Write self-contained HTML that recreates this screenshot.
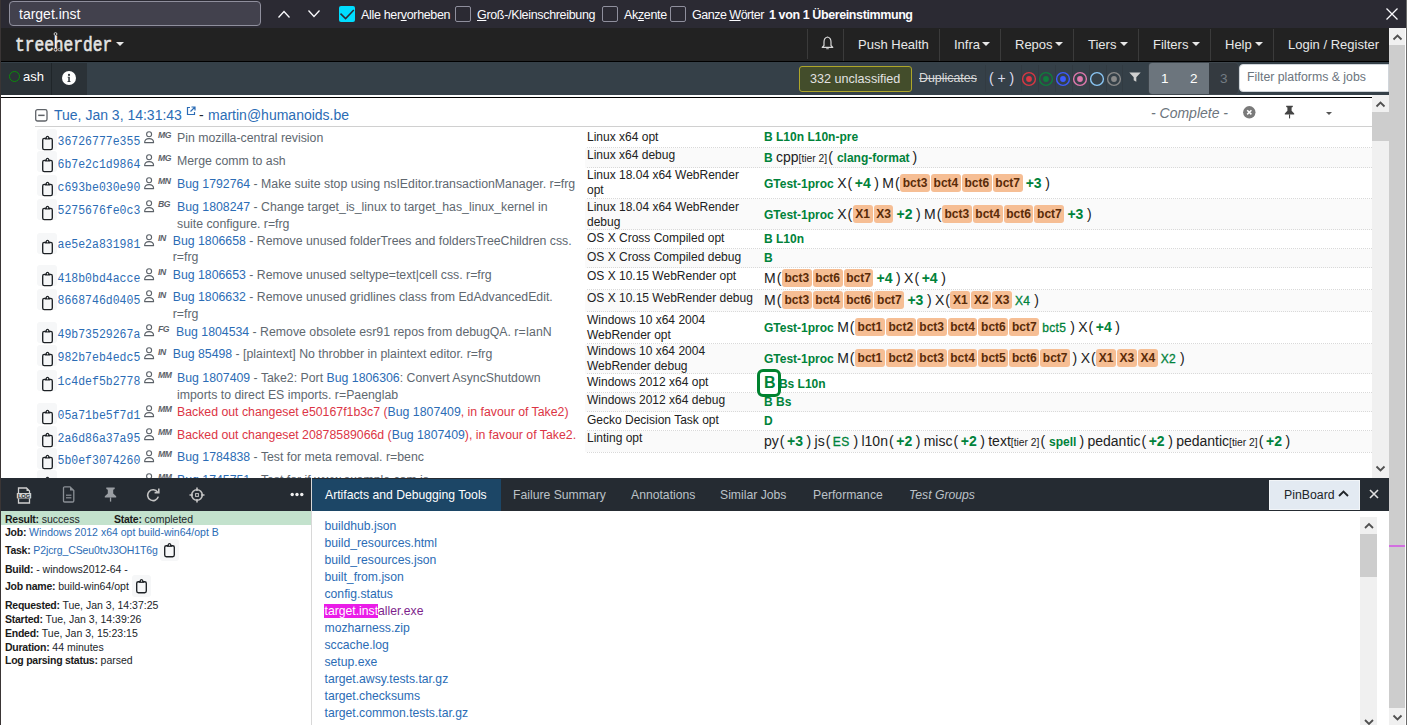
<!DOCTYPE html>
<html><head><meta charset="utf-8">
<style>
*{box-sizing:border-box}
html,body{margin:0;padding:0;width:1407px;height:725px;overflow:hidden;background:#fff;font-family:"Liberation Sans",sans-serif;position:relative}
.a{position:absolute;white-space:nowrap}
#findbar{left:0;top:0;width:1407px;height:28px;background:#2b2a33;color:#fbfbfe;font-size:12.5px;letter-spacing:-0.33px}
#ffield{left:9px;top:1px;width:252px;height:25px;background:#42414d;border:1px solid #8f8f9d;border-radius:4px}
.cb{width:16px;height:16px;border:1px solid #8f8f9d;border-radius:2px;top:6px}
#nav{left:0;top:28px;width:1389px;height:34px;background:#222;border-bottom:1px solid #000;color:#e8e8e8;font-size:13px}
.sep{top:1px;width:1px;height:29px;background:#3b3b3b}
.nt{top:9px;line-height:15px}
.caret{top:14px;width:0;height:0;border-top:4px solid #e8e8e8;border-left:4px solid transparent;border-right:4px solid transparent}
.tier{top:9px;font-size:13.5px;line-height:16px}
#sub{left:0;top:62px;width:1389px;height:33px;background:#354048;color:#fff;font-size:12px}
#pushes{left:0;top:95px;width:1372px;height:383px;background:#fff;overflow:hidden}
#outsb{left:1389px;top:28px;width:16px;height:697px;background:#cdcdcd}
#insb{left:1372px;top:95px;width:17px;height:383px;background:#f0f0f0}
#panel{left:0;top:478px;width:1389px;height:247px;background:#fff}

.clip{width:20px;height:21px;background:#f6f7f8;border-radius:3px}
.hash{font-family:"Liberation Mono",monospace;font-size:11.5px;line-height:16px;color:#2b6cb5;transform:scaleY(1.05);transform-origin:0 12px}
.ini{font-size:8.6px;letter-spacing:-0.4px;line-height:10px;font-weight:bold;font-style:italic;color:#5b6168}
.msg{font-size:12.3px;line-height:16px}
.dot{width:785px;height:1px;background-image:linear-gradient(to right,#d9d9d9 50%,transparent 50%);background-size:2px 1px}
.plat{font-size:12px;line-height:15px;color:#212121}
.jobs{font-size:12px;line-height:18px;height:18px}
.js{font-weight:bold;color:#00823a}
.jn{font-weight:normal;color:#00823a;-webkit-text-stroke:0.3px #00823a;margin:0 2px 0 2.5px;letter-spacing:0.3px}
.jb{display:inline-block;font-weight:bold;color:#5a2b08;background:#f6be94;border-radius:3px;padding:0 2.6px;margin:0 .5px;height:18px;vertical-align:top}
.gs{font-size:14px;color:#212121}
.gp,.gp2{font-size:14px;color:#212121}
.gp2{margin-left:2px}
.gp{margin:0 0 0 1px}
.cnt{font-weight:bold;font-size:14px;color:#00823a;margin:0 1.5px 0 2.6px}
.tier2{font-size:10.3px;color:#212121}
.sel{position:relative}
.sel:before{content:'';position:absolute;left:-7px;top:-8px;width:24px;height:28px;border:3px solid #00822f;border-radius:6px;background:#fff;box-sizing:border-box;z-index:0}
.sel i{position:relative;z-index:1;font-style:normal;font-size:16px}
.det{font-size:10.5px;line-height:12px;color:#212529}
.det b{color:#1a1a1a;letter-spacing:-0.25px}
.tab{top:10px;font-size:12.2px;line-height:15px;color:#bcc2c8}
.art{font-size:12.2px;line-height:14px;color:#2b6cb5}
</style></head><body>

<div id="findbar" class="a">
  <div id="ffield" class="a"></div>
  <div class="a" style="left:19px;top:5px;font-size:14px;line-height:18px;letter-spacing:0">target.inst</div>
  <svg class="a" style="left:277px;top:9px" width="14" height="10" viewBox="0 0 14 10"><path d="M1.5 8.5 L7 2.5 L12.5 8.5" fill="none" stroke="#fbfbfe" stroke-width="1.3"/></svg>
  <svg class="a" style="left:307px;top:9px" width="14" height="10" viewBox="0 0 14 10"><path d="M1.5 1.5 L7 7.5 L12.5 1.5" fill="none" stroke="#fbfbfe" stroke-width="1.3"/></svg>
  <div class="a" style="left:339px;top:6px;width:16px;height:16px;background:#00ddff;border-radius:2px"></div>
  <svg class="a" style="left:339px;top:6px" width="16" height="16" viewBox="0 0 16 16"><path d="M1.5 7.6 L6.6 12.6 L14.8 4.1" fill="none" stroke="#2b2a33" stroke-width="1.5"/></svg>
  <div class="a" style="left:361px;top:8px;line-height:15px">Alle her<u>v</u>orheben</div>
  <div class="a cb" style="left:455px"></div>
  <div class="a" style="left:477px;top:8px;line-height:15px"><u>G</u>roß-/Kleinschreibung</div>
  <div class="a cb" style="left:602px"></div>
  <div class="a" style="left:624px;top:8px;line-height:15px">Ak<u>z</u>ente</div>
  <div class="a cb" style="left:670px"></div>
  <div class="a" style="left:692px;top:8px;line-height:15px;letter-spacing:-0.5px">Ganze <u>W</u>örter</div>
  <div class="a" style="left:769px;top:8px;line-height:15px;font-weight:bold;letter-spacing:-0.4px">1 von 1 Übereinstimmung</div>
  <svg class="a" style="left:1385px;top:7px" width="14" height="14" viewBox="0 0 14 14"><path d="M1.5 1.5 L12.5 12.5 M12.5 1.5 L1.5 12.5" stroke="#fbfbfe" stroke-width="1.3"/></svg>
  <div class="a" style="left:1406px;top:0;width:1px;height:725px;background:#6b6b6b"></div>
</div>

<div id="nav" class="a">
  <div class="a" style="left:15px;top:7.5px;font-family:'Liberation Mono',monospace;font-size:16.2px;line-height:20px;color:#e4e4e4;-webkit-text-stroke:0.5px #e4e4e4;transform:scaleY(1.2);transform-origin:0 50%">treeherder</div>
  <div class="a caret" style="left:116px;top:14px"></div>
  <svg class="a" style="left:51px;top:4px" width="10" height="20" viewBox="0 0 10 20"><path d="M4.5 3 V16.5" stroke="#f2f2f2" stroke-width="1.2"/><circle cx="4.5" cy="2" r="1.4" fill="#222" stroke="#ddd" stroke-width="0.9"/><circle cx="4.5" cy="17.6" r="1.4" fill="#222" stroke="#ddd" stroke-width="0.9"/><circle cx="8.3" cy="17.6" r="1.2" fill="#222" stroke="#ccc" stroke-width="0.8"/></svg>
  <div class="a sep" style="left:807px;height:30px"></div>
  <svg class="a" style="left:821px;top:8px" width="13" height="14" viewBox="0 0 13 14"><path d="M6.5 1 C4 1.5 3 3.5 3 6 V9.5 L1.2 11.3 H11.8 L10 9.5 V6 C10 3.5 9 1.5 6.5 1 Z" fill="none" stroke="#d8d8d8" stroke-width="1.2" stroke-linejoin="round"/><path d="M5.2 12.3 H7.8 V13.2 H5.2Z" fill="#d8d8d8"/></svg>
  <div class="a sep" style="left:843px;height:32px"></div>
  <div class="a nt" style="left:858px">Push Health</div>
  <div class="a sep" style="left:939px;height:32px"></div>
  <div class="a nt" style="left:954px">Infra</div><div class="a caret" style="left:982px"></div>
  <div class="a sep" style="left:1000px;height:32px"></div>
  <div class="a nt" style="left:1015px">Repos</div><div class="a caret" style="left:1055px"></div>
  <div class="a sep" style="left:1073px;height:32px"></div>
  <div class="a nt" style="left:1088px">Tiers</div><div class="a caret" style="left:1120px"></div>
  <div class="a sep" style="left:1138px;height:32px"></div>
  <div class="a nt" style="left:1153px">Filters</div><div class="a caret" style="left:1192px"></div>
  <div class="a sep" style="left:1210px;height:32px"></div>
  <div class="a nt" style="left:1225px">Help</div><div class="a caret" style="left:1255px"></div>
  <div class="a sep" style="left:1273px;height:32px"></div>
  <div class="a nt" style="left:1288px">Login / Register</div>
</div>

<div id="sub" class="a">
  <div class="a" style="left:1px;top:1px;width:86px;height:32px;background:#2b3237"></div>
  <div class="a" style="left:51px;top:1px;width:1px;height:32px;background:#1f2529"></div>
  <div class="a" style="left:9px;top:9px;width:11px;height:11px;border:1.3px solid #0b8a0b;border-radius:50%"></div>
  <div class="a" style="left:23px;top:7px;font-size:13px;line-height:15px;color:#fff">ash</div>
  <svg class="a" style="left:62px;top:9px" width="14" height="14" viewBox="0 0 14 14"><circle cx="7" cy="7" r="7" fill="#fff"/><circle cx="7" cy="3.9" r="1.1" fill="#2b3237"/><path d="M5.6 5.8 H7.8 V10.2 H8.6 V11 H5.4 V10.2 H6.3 V6.6 H5.6Z" fill="#2b3237"/></svg>
  <div class="a" style="left:799px;top:4px;width:113px;height:26px;border:1px solid #aea62a;border-radius:3px;background:#434d2b"></div>
  <div class="a" style="left:810px;top:10px;font-size:12.6px;line-height:15px;color:#e2e2e2">332 unclassified</div>
  <div class="a" style="left:919px;top:9px;font-size:12.4px;line-height:15px;color:#d8d8d8;text-decoration:line-through">Duplicates</div>
  <div class="a" style="left:985px;top:3px;width:1px;height:27px;background:#323b42"></div>
  <div class="a" style="left:989px;top:8px;font-size:14px;line-height:17px;color:#dde">( + )</div>
  <svg class="a" style="left:1021px;top:9px" width="16" height="16" viewBox="0 0 16 16"><circle cx="8" cy="8" r="6.4" fill="none" stroke="#da3742" stroke-width="1.4"/><circle cx="8" cy="8" r="2.9" fill="#da3742"/></svg>
  <div class="a" style="left:1021px;top:3px;width:1px;height:27px;background:#323b42"></div>
  <svg class="a" style="left:1038px;top:9px" width="16" height="16" viewBox="0 0 16 16"><circle cx="8" cy="8" r="6.4" fill="none" stroke="#0f7d3b" stroke-width="1.4"/><circle cx="8" cy="8" r="2.9" fill="#0f7d3b"/></svg>
  <div class="a" style="left:1038px;top:3px;width:1px;height:27px;background:#323b42"></div>
  <svg class="a" style="left:1055px;top:9px" width="16" height="16" viewBox="0 0 16 16"><circle cx="8" cy="8" r="6.4" fill="none" stroke="#3d5cff" stroke-width="1.4"/><circle cx="8" cy="8" r="2.9" fill="#3d5cff"/></svg>
  <div class="a" style="left:1055px;top:3px;width:1px;height:27px;background:#323b42"></div>
  <svg class="a" style="left:1072px;top:9px" width="16" height="16" viewBox="0 0 16 16"><circle cx="8" cy="8" r="6.4" fill="none" stroke="#e078ad" stroke-width="1.4"/><circle cx="8" cy="8" r="2.9" fill="#e078ad"/></svg>
  <div class="a" style="left:1072px;top:3px;width:1px;height:27px;background:#323b42"></div>
  <svg class="a" style="left:1089px;top:9px" width="16" height="16" viewBox="0 0 16 16"><circle cx="8" cy="8" r="6.4" fill="none" stroke="#8ac6f5" stroke-width="1.4"/></svg>
  <div class="a" style="left:1089px;top:3px;width:1px;height:27px;background:#323b42"></div>
  <svg class="a" style="left:1106px;top:9px" width="16" height="16" viewBox="0 0 16 16"><circle cx="8" cy="8" r="6.4" fill="none" stroke="#8a8a8a" stroke-width="1.4"/><circle cx="8" cy="8" r="2.9" fill="#8a8a8a"/></svg>
  <div class="a" style="left:1106px;top:3px;width:1px;height:27px;background:#323b42"></div>
  <div class="a" style="left:1122px;top:3px;width:1px;height:27px;background:#323b42"></div>
  <svg class="a" style="left:1129px;top:10px" width="12" height="10" viewBox="0 0 12 10"><path d="M0.3 0.5 H11.7 L7.3 5.3 V9.8 L4.7 8.3 V5.3 Z" fill="#cfcfcf"/></svg>
  <div class="a" style="left:1148px;top:0px;width:91px;height:32.5px;border-radius:4px;overflow:hidden;background:#343a40;border:1px solid #3e464d">
    <div class="a" style="left:0;top:0;width:60px;height:32px;background:#6c757d"></div>
  </div>
  <div class="a tier" style="left:1161px;color:#fff">1</div>
  <div class="a tier" style="left:1190px;color:#fff">2</div>
  <div class="a tier" style="left:1220px;color:#737c84">3</div>
  <div class="a" style="left:1239px;top:2px;width:150px;height:28px;background:#fff;border-radius:4px 0 0 4px;border:1px solid #d0d5da"></div>
  <div class="a" style="left:1247px;top:8px;font-size:12.3px;line-height:15px;color:#6c757d">Filter platforms &amp; jobs</div>
</div>

<div id="pushes" class="a">
<div class="a" style="left:0;top:2px;width:1372px;height:1px;background:#000"></div>
<svg class="a" style="left:35px;top:14px" width="13" height="13" viewBox="0 0 13 13"><rect x="0.7" y="0.7" width="11.3" height="11.3" rx="1.8" fill="none" stroke="#5f6368" stroke-width="1.3"/><rect x="3.2" y="5.6" width="6.4" height="1.5" fill="#5f6368"/></svg>
<div class="a" style="left:54px;top:12px;font-size:14px;line-height:17px;color:#2b6cb5">Tue, Jan 3, 14:31:43</div>
<svg class="a" style="left:186px;top:11px" width="10" height="10" viewBox="0 0 10 10"><path d="M4 1.5 H1.5 V8.5 H8.5 V6" fill="none" stroke="#2b6cb5" stroke-width="1.2"/><path d="M5.5 1 H9 V4.5 M9 1 L4.5 5.5" fill="none" stroke="#2b6cb5" stroke-width="1.2"/></svg>
<div class="a" style="left:199px;top:12px;font-size:14px;line-height:17px;color:#212529">-</div>
<div class="a" style="left:208px;top:12px;font-size:14px;line-height:17px;color:#2b6cb5">martin@humanoids.be</div>
<div class="a" style="left:1151px;top:10px;font-size:14px;line-height:17px;color:#6c757d;font-style:italic">- Complete -</div>
<svg class="a" style="left:1243px;top:11px" width="13" height="13" viewBox="0 0 13 13"><circle cx="6.3" cy="6.3" r="6.2" fill="#7a7a7a"/><path d="M4.2 4.2 L8.4 8.4 M8.4 4.2 L4.2 8.4" stroke="#fff" stroke-width="1.5"/></svg>
<svg class="a" style="left:1284px;top:10px" width="11" height="14" viewBox="0 0 11 14"><path d="M2.2 0.8 H8.8 V2 L7.6 2.6 V5.8 L10.2 8.4 V9.4 H0.8 V8.4 L3.4 5.8 V2.6 L2.2 2 Z" fill="#444"/><rect x="5" y="9.4" width="1.1" height="4" fill="#444"/></svg>
<div class="a" style="left:1326px;top:16.5px;width:0;height:0;border-top:3.5px solid #555;border-left:3.5px solid transparent;border-right:3.5px solid transparent"></div>
<div class="a" style="left:35px;top:31px;width:1337px;height:1px;background:#d0d0d0"></div>
<div class="a clip" style="left:37px;top:33.6px"><svg width="20" height="22" viewBox="0 0 20 22" style="position:absolute;left:0;top:0"><rect x="5.7" y="9.4" width="9.6" height="11.2" rx="1.6" fill="none" stroke="#1d2125" stroke-width="1.35"/><path d="M7.6 10.4 L8.3 9 Q9.1 6.8 10.5 6.8 Q11.9 6.8 12.7 9 L13.4 10.4 Z" fill="#1d2125"/><circle cx="10.5" cy="8.7" r="0.7" fill="#fff"/></svg></div>
<div class="a hash" style="left:57.5px;top:38.8px">36726777e355</div>
<svg class="a" style="left:143px;top:35.8px" width="13" height="13" viewBox="0 0 13 13"><circle cx="6.1" cy="3.2" r="2.5" fill="none" stroke="#5b6168" stroke-width="1.1"/><path d="M1.6 11.6 Q1.6 7.6 6.1 7.6 Q10.6 7.6 10.6 11.6 Z" fill="none" stroke="#5b6168" stroke-width="1.1" stroke-linejoin="round"/></svg>
<div class="a ini" style="left:158px;top:35.3px">MG</div>
<div class="a msg" style="left:177px;top:35.0px"><span style="color:#606870">Pin mozilla-central revision</span></div>
<div class="a clip" style="left:37px;top:56.3px"><svg width="20" height="22" viewBox="0 0 20 22" style="position:absolute;left:0;top:0"><rect x="5.7" y="9.4" width="9.6" height="11.2" rx="1.6" fill="none" stroke="#1d2125" stroke-width="1.35"/><path d="M7.6 10.4 L8.3 9 Q9.1 6.8 10.5 6.8 Q11.9 6.8 12.7 9 L13.4 10.4 Z" fill="#1d2125"/><circle cx="10.5" cy="8.7" r="0.7" fill="#fff"/></svg></div>
<div class="a hash" style="left:57.5px;top:61.5px">6b7e2c1d9864</div>
<svg class="a" style="left:143px;top:58.5px" width="13" height="13" viewBox="0 0 13 13"><circle cx="6.1" cy="3.2" r="2.5" fill="none" stroke="#5b6168" stroke-width="1.1"/><path d="M1.6 11.6 Q1.6 7.6 6.1 7.6 Q10.6 7.6 10.6 11.6 Z" fill="none" stroke="#5b6168" stroke-width="1.1" stroke-linejoin="round"/></svg>
<div class="a ini" style="left:158px;top:58.0px">MG</div>
<div class="a msg" style="left:177px;top:57.7px"><span style="color:#606870">Merge comm to ash</span></div>
<div class="a clip" style="left:37px;top:79.5px"><svg width="20" height="22" viewBox="0 0 20 22" style="position:absolute;left:0;top:0"><rect x="5.7" y="9.4" width="9.6" height="11.2" rx="1.6" fill="none" stroke="#1d2125" stroke-width="1.35"/><path d="M7.6 10.4 L8.3 9 Q9.1 6.8 10.5 6.8 Q11.9 6.8 12.7 9 L13.4 10.4 Z" fill="#1d2125"/><circle cx="10.5" cy="8.7" r="0.7" fill="#fff"/></svg></div>
<div class="a hash" style="left:57.5px;top:84.7px">c693be030e90</div>
<svg class="a" style="left:143px;top:81.7px" width="13" height="13" viewBox="0 0 13 13"><circle cx="6.1" cy="3.2" r="2.5" fill="none" stroke="#5b6168" stroke-width="1.1"/><path d="M1.6 11.6 Q1.6 7.6 6.1 7.6 Q10.6 7.6 10.6 11.6 Z" fill="none" stroke="#5b6168" stroke-width="1.1" stroke-linejoin="round"/></svg>
<div class="a ini" style="left:158px;top:81.2px">MN</div>
<div class="a msg" style="left:177px;top:80.9px"><span style="color:#2b6cb5">Bug 1792764</span><span style="color:#606870"> - Make suite stop using nsIEditor.transactionManager. r=frg</span></div>
<div class="a clip" style="left:37px;top:103.7px"><svg width="20" height="22" viewBox="0 0 20 22" style="position:absolute;left:0;top:0"><rect x="5.7" y="9.4" width="9.6" height="11.2" rx="1.6" fill="none" stroke="#1d2125" stroke-width="1.35"/><path d="M7.6 10.4 L8.3 9 Q9.1 6.8 10.5 6.8 Q11.9 6.8 12.7 9 L13.4 10.4 Z" fill="#1d2125"/><circle cx="10.5" cy="8.7" r="0.7" fill="#fff"/></svg></div>
<div class="a hash" style="left:57.5px;top:107.7px">5275676fe0c3</div>
<svg class="a" style="left:143px;top:104.7px" width="13" height="13" viewBox="0 0 13 13"><circle cx="6.1" cy="3.2" r="2.5" fill="none" stroke="#5b6168" stroke-width="1.1"/><path d="M1.6 11.6 Q1.6 7.6 6.1 7.6 Q10.6 7.6 10.6 11.6 Z" fill="none" stroke="#5b6168" stroke-width="1.1" stroke-linejoin="round"/></svg>
<div class="a ini" style="left:158px;top:104.2px">BG</div>
<div class="a msg" style="left:177px;top:103.9px"><span style="color:#2b6cb5">Bug 1808247</span><span style="color:#606870"> - Change target_is_linux to target_has_linux_kernel in</span></div>
<div class="a msg" style="left:177px;top:120.5px"><span style="color:#606870">suite configure. r=frg</span></div>
<div class="a clip" style="left:37px;top:137.5px"><svg width="20" height="22" viewBox="0 0 20 22" style="position:absolute;left:0;top:0"><rect x="5.7" y="9.4" width="9.6" height="11.2" rx="1.6" fill="none" stroke="#1d2125" stroke-width="1.35"/><path d="M7.6 10.4 L8.3 9 Q9.1 6.8 10.5 6.8 Q11.9 6.8 12.7 9 L13.4 10.4 Z" fill="#1d2125"/><circle cx="10.5" cy="8.7" r="0.7" fill="#fff"/></svg></div>
<div class="a hash" style="left:57.5px;top:141.5px">ae5e2a831981</div>
<svg class="a" style="left:143px;top:138.5px" width="13" height="13" viewBox="0 0 13 13"><circle cx="6.1" cy="3.2" r="2.5" fill="none" stroke="#5b6168" stroke-width="1.1"/><path d="M1.6 11.6 Q1.6 7.6 6.1 7.6 Q10.6 7.6 10.6 11.6 Z" fill="none" stroke="#5b6168" stroke-width="1.1" stroke-linejoin="round"/></svg>
<div class="a ini" style="left:158px;top:138.0px">IN</div>
<div class="a msg" style="left:172.7px;top:137.7px"><span style="color:#2b6cb5">Bug 1806658</span><span style="color:#606870"> - Remove unused folderTrees and foldersTreeChildren css.</span></div>
<div class="a msg" style="left:172.7px;top:154.3px"><span style="color:#606870">r=frg</span></div>
<div class="a clip" style="left:37px;top:170.4px"><svg width="20" height="22" viewBox="0 0 20 22" style="position:absolute;left:0;top:0"><rect x="5.7" y="9.4" width="9.6" height="11.2" rx="1.6" fill="none" stroke="#1d2125" stroke-width="1.35"/><path d="M7.6 10.4 L8.3 9 Q9.1 6.8 10.5 6.8 Q11.9 6.8 12.7 9 L13.4 10.4 Z" fill="#1d2125"/><circle cx="10.5" cy="8.7" r="0.7" fill="#fff"/></svg></div>
<div class="a hash" style="left:57.5px;top:175.6px">418b0bd4acce</div>
<svg class="a" style="left:143px;top:172.6px" width="13" height="13" viewBox="0 0 13 13"><circle cx="6.1" cy="3.2" r="2.5" fill="none" stroke="#5b6168" stroke-width="1.1"/><path d="M1.6 11.6 Q1.6 7.6 6.1 7.6 Q10.6 7.6 10.6 11.6 Z" fill="none" stroke="#5b6168" stroke-width="1.1" stroke-linejoin="round"/></svg>
<div class="a ini" style="left:158px;top:172.1px">IN</div>
<div class="a msg" style="left:172.7px;top:171.8px"><span style="color:#2b6cb5">Bug 1806653</span><span style="color:#606870"> - Remove unused seltype=text|cell css. r=frg</span></div>
<div class="a clip" style="left:37px;top:194.1px"><svg width="20" height="22" viewBox="0 0 20 22" style="position:absolute;left:0;top:0"><rect x="5.7" y="9.4" width="9.6" height="11.2" rx="1.6" fill="none" stroke="#1d2125" stroke-width="1.35"/><path d="M7.6 10.4 L8.3 9 Q9.1 6.8 10.5 6.8 Q11.9 6.8 12.7 9 L13.4 10.4 Z" fill="#1d2125"/><circle cx="10.5" cy="8.7" r="0.7" fill="#fff"/></svg></div>
<div class="a hash" style="left:57.5px;top:198.1px">8668746d0405</div>
<svg class="a" style="left:143px;top:195.1px" width="13" height="13" viewBox="0 0 13 13"><circle cx="6.1" cy="3.2" r="2.5" fill="none" stroke="#5b6168" stroke-width="1.1"/><path d="M1.6 11.6 Q1.6 7.6 6.1 7.6 Q10.6 7.6 10.6 11.6 Z" fill="none" stroke="#5b6168" stroke-width="1.1" stroke-linejoin="round"/></svg>
<div class="a ini" style="left:158px;top:194.6px">IN</div>
<div class="a msg" style="left:172.7px;top:194.3px"><span style="color:#2b6cb5">Bug 1806632</span><span style="color:#606870"> - Remove unused gridlines class from EdAdvancedEdit.</span></div>
<div class="a msg" style="left:172.7px;top:210.9px"><span style="color:#606870">r=frg</span></div>
<div class="a clip" style="left:37px;top:227.2px"><svg width="20" height="22" viewBox="0 0 20 22" style="position:absolute;left:0;top:0"><rect x="5.7" y="9.4" width="9.6" height="11.2" rx="1.6" fill="none" stroke="#1d2125" stroke-width="1.35"/><path d="M7.6 10.4 L8.3 9 Q9.1 6.8 10.5 6.8 Q11.9 6.8 12.7 9 L13.4 10.4 Z" fill="#1d2125"/><circle cx="10.5" cy="8.7" r="0.7" fill="#fff"/></svg></div>
<div class="a hash" style="left:57.5px;top:232.4px">49b73529267a</div>
<svg class="a" style="left:143px;top:229.4px" width="13" height="13" viewBox="0 0 13 13"><circle cx="6.1" cy="3.2" r="2.5" fill="none" stroke="#5b6168" stroke-width="1.1"/><path d="M1.6 11.6 Q1.6 7.6 6.1 7.6 Q10.6 7.6 10.6 11.6 Z" fill="none" stroke="#5b6168" stroke-width="1.1" stroke-linejoin="round"/></svg>
<div class="a ini" style="left:158px;top:228.9px">FG</div>
<div class="a msg" style="left:176px;top:228.6px"><span style="color:#2b6cb5">Bug 1804534</span><span style="color:#606870"> - Remove obsolete esr91 repos from debugQA. r=IanN</span></div>
<div class="a clip" style="left:37px;top:250.0px"><svg width="20" height="22" viewBox="0 0 20 22" style="position:absolute;left:0;top:0"><rect x="5.7" y="9.4" width="9.6" height="11.2" rx="1.6" fill="none" stroke="#1d2125" stroke-width="1.35"/><path d="M7.6 10.4 L8.3 9 Q9.1 6.8 10.5 6.8 Q11.9 6.8 12.7 9 L13.4 10.4 Z" fill="#1d2125"/><circle cx="10.5" cy="8.7" r="0.7" fill="#fff"/></svg></div>
<div class="a hash" style="left:57.5px;top:255.2px">982b7eb4edc5</div>
<svg class="a" style="left:143px;top:252.2px" width="13" height="13" viewBox="0 0 13 13"><circle cx="6.1" cy="3.2" r="2.5" fill="none" stroke="#5b6168" stroke-width="1.1"/><path d="M1.6 11.6 Q1.6 7.6 6.1 7.6 Q10.6 7.6 10.6 11.6 Z" fill="none" stroke="#5b6168" stroke-width="1.1" stroke-linejoin="round"/></svg>
<div class="a ini" style="left:158px;top:251.7px">IN</div>
<div class="a msg" style="left:172.7px;top:251.4px"><span style="color:#2b6cb5">Bug 85498</span><span style="color:#606870"> - [plaintext] No throbber in plaintext editor. r=frg</span></div>
<div class="a clip" style="left:37px;top:274.9px"><svg width="20" height="22" viewBox="0 0 20 22" style="position:absolute;left:0;top:0"><rect x="5.7" y="9.4" width="9.6" height="11.2" rx="1.6" fill="none" stroke="#1d2125" stroke-width="1.35"/><path d="M7.6 10.4 L8.3 9 Q9.1 6.8 10.5 6.8 Q11.9 6.8 12.7 9 L13.4 10.4 Z" fill="#1d2125"/><circle cx="10.5" cy="8.7" r="0.7" fill="#fff"/></svg></div>
<div class="a hash" style="left:57.5px;top:278.9px">1c4def5b2778</div>
<svg class="a" style="left:143px;top:275.9px" width="13" height="13" viewBox="0 0 13 13"><circle cx="6.1" cy="3.2" r="2.5" fill="none" stroke="#5b6168" stroke-width="1.1"/><path d="M1.6 11.6 Q1.6 7.6 6.1 7.6 Q10.6 7.6 10.6 11.6 Z" fill="none" stroke="#5b6168" stroke-width="1.1" stroke-linejoin="round"/></svg>
<div class="a ini" style="left:158px;top:275.4px">MM</div>
<div class="a msg" style="left:177px;top:275.1px"><span style="color:#2b6cb5">Bug 1807409</span><span style="color:#606870"> - Take2: Port </span><span style="color:#2b6cb5">Bug 1806306</span><span style="color:#606870">: Convert AsyncShutdown</span></div>
<div class="a msg" style="left:177px;top:291.7px"><span style="color:#606870">imports to direct ES imports. r=Paenglab</span></div>
<div class="a clip" style="left:37px;top:307.7px"><svg width="20" height="22" viewBox="0 0 20 22" style="position:absolute;left:0;top:0"><rect x="5.7" y="9.4" width="9.6" height="11.2" rx="1.6" fill="none" stroke="#1d2125" stroke-width="1.35"/><path d="M7.6 10.4 L8.3 9 Q9.1 6.8 10.5 6.8 Q11.9 6.8 12.7 9 L13.4 10.4 Z" fill="#1d2125"/><circle cx="10.5" cy="8.7" r="0.7" fill="#fff"/></svg></div>
<div class="a hash" style="left:57.5px;top:312.9px">05a71be5f7d1</div>
<svg class="a" style="left:143px;top:309.9px" width="13" height="13" viewBox="0 0 13 13"><circle cx="6.1" cy="3.2" r="2.5" fill="none" stroke="#5b6168" stroke-width="1.1"/><path d="M1.6 11.6 Q1.6 7.6 6.1 7.6 Q10.6 7.6 10.6 11.6 Z" fill="none" stroke="#5b6168" stroke-width="1.1" stroke-linejoin="round"/></svg>
<div class="a ini" style="left:158px;top:309.4px">MM</div>
<div class="a msg" style="left:177px;top:309.1px"><span style="color:#dc3545">Backed out changeset e50167f1b3c7 (</span><span style="color:#2b6cb5">Bug 1807409</span><span style="color:#dc3545">, in favour of Take2)</span></div>
<div class="a clip" style="left:37px;top:330.5px"><svg width="20" height="22" viewBox="0 0 20 22" style="position:absolute;left:0;top:0"><rect x="5.7" y="9.4" width="9.6" height="11.2" rx="1.6" fill="none" stroke="#1d2125" stroke-width="1.35"/><path d="M7.6 10.4 L8.3 9 Q9.1 6.8 10.5 6.8 Q11.9 6.8 12.7 9 L13.4 10.4 Z" fill="#1d2125"/><circle cx="10.5" cy="8.7" r="0.7" fill="#fff"/></svg></div>
<div class="a hash" style="left:57.5px;top:335.7px">2a6d86a37a95</div>
<svg class="a" style="left:143px;top:332.7px" width="13" height="13" viewBox="0 0 13 13"><circle cx="6.1" cy="3.2" r="2.5" fill="none" stroke="#5b6168" stroke-width="1.1"/><path d="M1.6 11.6 Q1.6 7.6 6.1 7.6 Q10.6 7.6 10.6 11.6 Z" fill="none" stroke="#5b6168" stroke-width="1.1" stroke-linejoin="round"/></svg>
<div class="a ini" style="left:158px;top:332.2px">MM</div>
<div class="a msg" style="left:177px;top:331.9px"><span style="color:#dc3545">Backed out changeset 20878589066d (</span><span style="color:#2b6cb5">Bug 1807409</span><span style="color:#dc3545">), in favour of Take2.</span></div>
<div class="a clip" style="left:37px;top:352.7px"><svg width="20" height="22" viewBox="0 0 20 22" style="position:absolute;left:0;top:0"><rect x="5.7" y="9.4" width="9.6" height="11.2" rx="1.6" fill="none" stroke="#1d2125" stroke-width="1.35"/><path d="M7.6 10.4 L8.3 9 Q9.1 6.8 10.5 6.8 Q11.9 6.8 12.7 9 L13.4 10.4 Z" fill="#1d2125"/><circle cx="10.5" cy="8.7" r="0.7" fill="#fff"/></svg></div>
<div class="a hash" style="left:57.5px;top:357.9px">5b0ef3074260</div>
<svg class="a" style="left:143px;top:354.9px" width="13" height="13" viewBox="0 0 13 13"><circle cx="6.1" cy="3.2" r="2.5" fill="none" stroke="#5b6168" stroke-width="1.1"/><path d="M1.6 11.6 Q1.6 7.6 6.1 7.6 Q10.6 7.6 10.6 11.6 Z" fill="none" stroke="#5b6168" stroke-width="1.1" stroke-linejoin="round"/></svg>
<div class="a ini" style="left:158px;top:354.4px">MM</div>
<div class="a msg" style="left:177px;top:354.1px"><span style="color:#2b6cb5">Bug 1784838</span><span style="color:#606870"> - Test for meta removal. r=benc</span></div>
<div class="a clip" style="left:37px;top:375.4px"><svg width="20" height="22" viewBox="0 0 20 22" style="position:absolute;left:0;top:0"><rect x="5.7" y="9.4" width="9.6" height="11.2" rx="1.6" fill="none" stroke="#1d2125" stroke-width="1.35"/><path d="M7.6 10.4 L8.3 9 Q9.1 6.8 10.5 6.8 Q11.9 6.8 12.7 9 L13.4 10.4 Z" fill="#1d2125"/><circle cx="10.5" cy="8.7" r="0.7" fill="#fff"/></svg></div>
<div class="a hash" style="left:57.5px;top:380.6px">8a3b4e0c1f27</div>
<svg class="a" style="left:143px;top:377.6px" width="13" height="13" viewBox="0 0 13 13"><circle cx="6.1" cy="3.2" r="2.5" fill="none" stroke="#5b6168" stroke-width="1.1"/><path d="M1.6 11.6 Q1.6 7.6 6.1 7.6 Q10.6 7.6 10.6 11.6 Z" fill="none" stroke="#5b6168" stroke-width="1.1" stroke-linejoin="round"/></svg>
<div class="a ini" style="left:158px;top:377.1px">MM</div>
<div class="a msg" style="left:177px;top:376.8px"><span style="color:#2b6cb5">Bug 1745751</span><span style="color:#606870"> - Test for if www.example.com is</span></div>
<div class="a" style="left:585px;top:32.5px;width:787px;height:20.5px;background:#fff"></div>
<div class="a dot" style="left:587px;top:52.0px"></div>
<div class="a" style="left:585px;top:53.0px;width:787px;height:19.8px;background:#fafafa"></div>
<div class="a dot" style="left:587px;top:71.8px"></div>
<div class="a" style="left:585px;top:72.8px;width:787px;height:31.6px;background:#fff"></div>
<div class="a dot" style="left:587px;top:103.4px"></div>
<div class="a" style="left:585px;top:104.4px;width:787px;height:30.8px;background:#fafafa"></div>
<div class="a dot" style="left:587px;top:134.2px"></div>
<div class="a" style="left:585px;top:135.2px;width:787px;height:19.1px;background:#fff"></div>
<div class="a dot" style="left:587px;top:153.3px"></div>
<div class="a" style="left:585px;top:154.3px;width:787px;height:19.0px;background:#fafafa"></div>
<div class="a dot" style="left:587px;top:172.3px"></div>
<div class="a" style="left:585px;top:173.3px;width:787px;height:22.0px;background:#fff"></div>
<div class="a dot" style="left:587px;top:194.3px"></div>
<div class="a" style="left:585px;top:195.3px;width:787px;height:22.1px;background:#fafafa"></div>
<div class="a dot" style="left:587px;top:216.4px"></div>
<div class="a" style="left:585px;top:217.4px;width:787px;height:31.2px;background:#fff"></div>
<div class="a dot" style="left:587px;top:247.6px"></div>
<div class="a" style="left:585px;top:248.6px;width:787px;height:30.6px;background:#fafafa"></div>
<div class="a dot" style="left:587px;top:278.2px"></div>
<div class="a" style="left:585px;top:279.2px;width:787px;height:18.9px;background:#fff"></div>
<div class="a dot" style="left:587px;top:297.1px"></div>
<div class="a" style="left:585px;top:298.1px;width:787px;height:19.1px;background:#fafafa"></div>
<div class="a dot" style="left:587px;top:316.2px"></div>
<div class="a" style="left:585px;top:317.2px;width:787px;height:18.9px;background:#fff"></div>
<div class="a dot" style="left:587px;top:335.1px"></div>
<div class="a" style="left:585px;top:336.1px;width:787px;height:21.4px;background:#fafafa"></div>
<div class="a dot" style="left:587px;top:356.5px"></div>
<div class="a plat" style="left:587px;top:35.0px">Linux x64 opt</div>
<div class="a jobs" style="left:764px;top:32.8px"><span class="js">B</span> <span class="js">L10n</span> <span class="js">L10n-pre</span></div>
<div class="a plat" style="left:587px;top:53.3px">Linux x64 debug</div>
<div class="a jobs" style="left:764px;top:52.9px"><span class="js">B</span> <span class="gs">cpp</span><span class="tier2">[tier 2]</span><span class="gp">(</span><span class="js" style="margin:0 1px 0 4px">clang-format</span><span class="gp2">)</span></div>
<div class="a plat" style="left:587px;top:73.1px">Linux 18.04 x64 WebRender</div>
<div class="a plat" style="left:587px;top:88.3px">opt</div>
<div class="a jobs" style="left:764px;top:78.6px"><span class="js">GTest-1proc</span> <span class="gs">X</span><span class="gp">(</span><span class="cnt">+4</span><span class="gp2">)</span> <span class="gs">M</span><span class="gp">(</span><span class="jb">bct3</span><span class="jb">bct4</span><span class="jb">bct6</span><span class="jb">bct7</span><span class="cnt">+3</span><span class="gp2">)</span></div>
<div class="a plat" style="left:587px;top:104.7px">Linux 18.04 x64 WebRender</div>
<div class="a plat" style="left:587px;top:119.9px">debug</div>
<div class="a jobs" style="left:764px;top:109.8px"><span class="js">GTest-1proc</span> <span class="gs">X</span><span class="gp">(</span><span class="jb">X1</span><span class="jb">X3</span><span class="cnt">+2</span><span class="gp2">)</span> <span class="gs">M</span><span class="gp">(</span><span class="jb">bct3</span><span class="jb">bct4</span><span class="jb">bct6</span><span class="jb">bct7</span><span class="cnt">+3</span><span class="gp2">)</span></div>
<div class="a plat" style="left:587px;top:135.5px">OS X Cross Compiled opt</div>
<div class="a jobs" style="left:764px;top:134.8px"><span class="js">B</span> <span class="js">L10n</span></div>
<div class="a plat" style="left:587px;top:154.6px">OS X Cross Compiled debug</div>
<div class="a jobs" style="left:764px;top:153.8px"><span class="js">B</span></div>
<div class="a plat" style="left:587px;top:173.6px">OS X 10.15 WebRender opt</div>
<div class="a jobs" style="left:764px;top:174.3px"><span class="gs">M</span><span class="gp">(</span><span class="jb">bct3</span><span class="jb">bct6</span><span class="jb">bct7</span><span class="cnt">+4</span><span class="gp2">)</span> <span class="gs">X</span><span class="gp">(</span><span class="cnt">+4</span><span class="gp2">)</span></div>
<div class="a plat" style="left:587px;top:195.6px">OS X 10.15 WebRender debug</div>
<div class="a jobs" style="left:764px;top:196.4px"><span class="gs">M</span><span class="gp">(</span><span class="jb">bct3</span><span class="jb">bct4</span><span class="jb">bct6</span><span class="jb">bct7</span><span class="cnt">+3</span><span class="gp2">)</span> <span class="gs">X</span><span class="gp">(</span><span class="jb">X1</span><span class="jb">X2</span><span class="jb">X3</span><span class="jn">X4</span><span class="gp2">)</span></div>
<div class="a plat" style="left:587px;top:217.7px">Windows 10 x64 2004</div>
<div class="a plat" style="left:587px;top:232.9px">WebRender opt</div>
<div class="a jobs" style="left:764px;top:223.0px"><span class="js">GTest-1proc</span> <span class="gs">M</span><span class="gp">(</span><span class="jb">bct1</span><span class="jb">bct2</span><span class="jb">bct3</span><span class="jb">bct4</span><span class="jb">bct6</span><span class="jb">bct7</span><span class="jn">bct5</span><span class="gp2">)</span> <span class="gs">X</span><span class="gp">(</span><span class="cnt">+4</span><span class="gp2">)</span></div>
<div class="a plat" style="left:587px;top:248.9px">Windows 10 x64 2004</div>
<div class="a plat" style="left:587px;top:264.1px">WebRender debug</div>
<div class="a jobs" style="left:764px;top:253.9px"><span class="js">GTest-1proc</span> <span class="gs">M</span><span class="gp">(</span><span class="jb">bct1</span><span class="jb">bct2</span><span class="jb">bct3</span><span class="jb">bct4</span><span class="jb">bct5</span><span class="jb">bct6</span><span class="jb">bct7</span><span class="gp2">)</span> <span class="gs">X</span><span class="gp">(</span><span class="jb">X1</span><span class="jb">X3</span><span class="jb">X4</span><span class="jn">X2</span><span class="gp2">)</span></div>
<div class="a plat" style="left:587px;top:279.5px">Windows 2012 x64 opt</div>
<div class="a jobs" style="left:764px;top:278.6px"><span class="js sel"><i>B</i></span> <span class="js">Bs</span> <span class="js">L10n</span></div>
<div class="a plat" style="left:587px;top:298.4px">Windows 2012 x64 debug</div>
<div class="a jobs" style="left:764px;top:297.6px"><span class="js">B</span> <span class="js">Bs</span></div>
<div class="a plat" style="left:587px;top:317.5px">Gecko Decision Task opt</div>
<div class="a jobs" style="left:764px;top:316.6px"><span class="js">D</span></div>
<div class="a plat" style="left:587px;top:336.4px">Linting opt</div>
<div class="a jobs" style="left:764px;top:336.8px"><span class="gs">py</span><span class="gp">(</span><span class="cnt">+3</span><span class="gp2">)</span> <span class="gs">js</span><span class="gp">(</span><span class="jn">ES</span><span class="gp2">)</span> <span class="gs">l10n</span><span class="gp">(</span><span class="cnt">+2</span><span class="gp2">)</span> <span class="gs">misc</span><span class="gp">(</span><span class="cnt">+2</span><span class="gp2">)</span> <span class="gs">text</span><span class="tier2">[tier 2]</span><span class="gp">(</span><span class="js" style="margin:0 1px 0 4px">spell</span><span class="gp2">)</span> <span class="gs">pedantic</span><span class="gp">(</span><span class="cnt">+2</span><span class="gp2">)</span> <span class="gs">pedantic</span><span class="tier2">[tier 2]</span><span class="gp">(</span><span class="cnt">+2</span><span class="gp2">)</span></div>
</div>
<div id="insb" class="a"><div class="a" style="left:0;top:17px;width:17px;height:29px;background:#cdcdcd"></div><svg class="a" style="left:3px;top:5px" width="11" height="8" viewBox="0 0 11 8"><path d="M1.5 6.5 L5.5 2.5 L9.5 6.5" fill="none" stroke="#505050" stroke-width="1.8"/></svg><svg class="a" style="left:3px;top:370px" width="11" height="8" viewBox="0 0 11 8"><path d="M1.5 1.5 L5.5 5.5 L9.5 1.5" fill="none" stroke="#505050" stroke-width="1.8"/></svg></div>
<div id="outsb" class="a"><div class="a" style="left:0;top:0;width:16px;height:17px;background:#f0f0f0"></div><svg class="a" style="left:3px;top:5px" width="11" height="8" viewBox="0 0 11 8"><path d="M1.5 6.5 L5.5 2.5 L9.5 6.5" fill="none" stroke="#505050" stroke-width="1.8"/></svg><div class="a" style="left:0;top:680px;width:16px;height:17px;background:#f0f0f0"></div><svg class="a" style="left:3px;top:686px" width="11" height="8" viewBox="0 0 11 8"><path d="M1.5 1.5 L5.5 5.5 L9.5 1.5" fill="none" stroke="#505050" stroke-width="1.8"/></svg><div class="a" style="left:0;top:517px;width:16px;height:2px;background:#d26fe0"></div></div>
<div id="panel" class="a">
<div class="a" style="left:0;top:0;width:311px;height:33px;background:#252b32"></div>
<svg class="a" style="left:16px;top:9px" width="16" height="17" viewBox="0 0 16 17"><path d="M2.5 6 V1 H10.5 L13.5 4 V6 M2.5 11.5 V16 H13.5 V11.5" fill="none" stroke="#d0d0d0" stroke-width="1.3"/><path d="M10.5 1 V4 H13.5Z" fill="#d0d0d0"/><rect x="0.8" y="6" width="14.4" height="5.6" fill="#d0d0d0" rx="0.5"/><text x="8" y="10.7" text-anchor="middle" font-family="Liberation Sans" font-weight="bold" font-size="5.6" fill="#252b32">LOG</text></svg>
<svg class="a" style="left:62px;top:8px" width="13" height="17" viewBox="0 0 13 17"><path d="M1.5 2 Q1.5 0.8 2.7 0.8 H8 L11.8 4.6 V14.8 Q11.8 16 10.6 16 H2.7 Q1.5 16 1.5 14.8 Z" fill="none" stroke="#8b9096" stroke-width="1.3"/><path d="M8 0.8 V4.6 H11.8Z" fill="#8b9096"/><rect x="4" y="8.6" width="5.4" height="1.2" fill="#8b9096"/><rect x="4" y="11.2" width="5.4" height="1.2" fill="#8b9096"/></svg>
<svg class="a" style="left:104px;top:9px" width="13" height="15" viewBox="0 0 13 15"><path d="M2.3 0.5 H10.7 V2 L9.2 2.8 V6.4 L12.2 9.2 V10.4 H0.8 V9.2 L3.8 6.4 V2.8 L2.3 2 Z" fill="#9a9ea3"/><rect x="5.9" y="10.4" width="1.3" height="4.2" fill="#9a9ea3"/></svg>
<svg class="a" style="left:146px;top:10px" width="15" height="14" viewBox="0 0 15 14"><path d="M11.6 4.2 A5.4 5.4 0 1 0 12.3 8.6" fill="none" stroke="#c4c4c4" stroke-width="1.6"/><path d="M8.6 4.6 H12.8 V0.6" fill="none" stroke="#c4c4c4" stroke-width="1.6"/></svg>
<svg class="a" style="left:189px;top:9px" width="16" height="16" viewBox="0 0 16 16"><circle cx="8" cy="8" r="5.3" fill="none" stroke="#c4c4c4" stroke-width="1.6"/><path d="M8 0.5 V4 M8 12 V15.5 M0.5 8 H4 M12 8 H15.5" stroke="#c4c4c4" stroke-width="1.6"/><rect x="6.6" y="6.6" width="2.8" height="2.8" fill="none" stroke="#c4c4c4" stroke-width="1"/></svg>
<svg class="a" style="left:290px;top:14px" width="14" height="5" viewBox="0 0 14 5"><circle cx="2.2" cy="2.5" r="1.7" fill="#f0f0f0"/><circle cx="7" cy="2.5" r="1.7" fill="#f0f0f0"/><circle cx="11.8" cy="2.5" r="1.7" fill="#f0f0f0"/></svg>
<div class="a" style="left:311px;top:0;width:1px;height:247px;background:#d8d8d8"></div>
<div class="a" style="left:1px;top:33px;width:310px;height:14px;background:#c3e2cd"></div>
<div class="a det" style="left:5px;top:36px;line-height:11px"><b>Result:</b> success</div>
<div class="a det" style="left:114px;top:36px;line-height:11px"><b>State:</b> completed</div>
<div class="a det" style="left:5px;top:47.9px"><b>Job:</b> <span style="color:#2b6cb5">Windows 2012 x64 opt build-win64/opt B</span></div>
<div class="a det" style="left:5px;top:66.0px"><b>Task:</b> <span style="color:#2b6cb5;letter-spacing:-0.1px">P2jcrg_CSeu0tvJ3OH1T6g</span></div>
<div class="a det" style="left:5px;top:84.5px"><b>Build:</b> - windows2012-64 -</div>
<div class="a det" style="left:5px;top:102.0px"><b>Job name:</b> build-win64/opt</div>
<div class="a det" style="left:5px;top:121.4px"><b>Requested:</b> Tue, Jan 3, 14:37:25</div>
<div class="a det" style="left:5px;top:134.9px"><b>Started:</b> Tue, Jan 3, 14:39:26</div>
<div class="a det" style="left:5px;top:148.7px"><b>Ended:</b> Tue, Jan 3, 15:23:15</div>
<div class="a det" style="left:5px;top:162.7px"><b>Duration:</b> 44 minutes</div>
<div class="a det" style="left:5px;top:175.5px"><b>Log parsing status:</b> parsed</div>
<div class="a" style="left:160.4px;top:61.3px;width:18.5px;height:22px;background:#f6f7f8;border-radius:3px"><svg width="19" height="22" viewBox="0 0 19 22" style="position:absolute;left:0;top:0"><rect x="4.7" y="6.7" width="9.6" height="11" rx="1.6" fill="none" stroke="#1d2125" stroke-width="1.35"/><path d="M6.6 7.7 L7.3 6.3 Q8.1 4.1 9.5 4.1 Q10.9 4.1 11.7 6.3 L12.4 7.7 Z" fill="#1d2125"/><circle cx="9.5" cy="6" r="0.7" fill="#fff"/></svg></div>
<div class="a" style="left:132.3px;top:97.2px;width:18.5px;height:22px;background:#f6f7f8;border-radius:3px"><svg width="19" height="22" viewBox="0 0 19 22" style="position:absolute;left:0;top:0"><rect x="4.7" y="6.7" width="9.6" height="11" rx="1.6" fill="none" stroke="#1d2125" stroke-width="1.35"/><path d="M6.6 7.7 L7.3 6.3 Q8.1 4.1 9.5 4.1 Q10.9 4.1 11.7 6.3 L12.4 7.7 Z" fill="#1d2125"/><circle cx="9.5" cy="6" r="0.7" fill="#fff"/></svg></div>
<div class="a" style="left:312px;top:0;width:1077px;height:33px;background:#252b32"></div>
<div class="a" style="left:312px;top:1px;width:189px;height:32px;background:#1c4666"></div>
<div class="a tab" style="left:325px;color:#fff">Artifacts and Debugging Tools</div>
<div class="a tab" style="left:513px">Failure Summary</div>
<div class="a tab" style="left:631px">Annotations</div>
<div class="a tab" style="left:720px">Similar Jobs</div>
<div class="a tab" style="left:813px">Performance</div>
<div class="a tab" style="left:909px;font-style:italic">Test Groups</div>
<div class="a" style="left:1269px;top:1.5px;width:91px;height:30px;background:#e3eaf2;border:1px solid #f2f5f8"></div>
<div class="a" style="left:1284px;top:10px;font-size:12.3px;line-height:15px;color:#212529">PinBoard</div>
<svg class="a" style="left:1338px;top:12px" width="11" height="7" viewBox="0 0 11 7"><path d="M1 6 L5.5 1.5 L10 6" fill="none" stroke="#212529" stroke-width="1.9"/></svg>
<svg class="a" style="left:1369px;top:11px" width="10" height="10" viewBox="0 0 10 10"><path d="M1 1 L9 9 M9 1 L1 9" stroke="#e0e0e0" stroke-width="1.6"/></svg>
<div class="a art" style="left:324.5px;top:40.6px">buildhub.json</div>
<div class="a art" style="left:324.5px;top:57.6px">build_resources.html</div>
<div class="a art" style="left:324.5px;top:74.6px">build_resources.json</div>
<div class="a art" style="left:324.5px;top:91.6px">built_from.json</div>
<div class="a art" style="left:324.5px;top:108.6px">config.status</div>
<div class="a" style="left:324px;top:126.1px;width:53.5px;height:13.5px;background:#ea1ce8"></div>
<div class="a art" style="left:324.5px;top:125.6px"><span style="color:#fff">target.inst</span><span style="color:#7d1f8c">aller.exe</span></div>
<div class="a art" style="left:324.5px;top:142.6px">mozharness.zip</div>
<div class="a art" style="left:324.5px;top:159.6px">sccache.log</div>
<div class="a art" style="left:324.5px;top:176.6px">setup.exe</div>
<div class="a art" style="left:324.5px;top:193.6px">target.awsy.tests.tar.gz</div>
<div class="a art" style="left:324.5px;top:210.6px">target.checksums</div>
<div class="a art" style="left:324.5px;top:227.6px">target.common.tests.tar.gz</div>
<div class="a" style="left:1360px;top:39px;width:17px;height:208px;background:#f0f0f0"></div>
<div class="a" style="left:1360px;top:56px;width:17px;height:43px;background:#cdcdcd"></div>
<svg class="a" style="left:1364px;top:44px" width="10" height="7" viewBox="0 0 10 7"><path d="M1 6 L5 2 L9 6" fill="none" stroke="#505050" stroke-width="1.8"/></svg>
<svg class="a" style="left:1364px;top:241px" width="10" height="7" viewBox="0 0 10 7"><path d="M1 1 L5 5 L9 1" fill="none" stroke="#505050" stroke-width="1.8"/></svg>
</div>
<div class="a" style="left:0;top:0;width:1px;height:725px;background:#3a3535"></div>
</body></html>
